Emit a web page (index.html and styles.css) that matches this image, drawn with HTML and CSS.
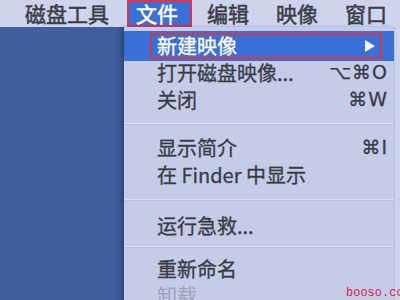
FILE: index.html
```html
<!DOCTYPE html>
<html lang="zh-CN">
<head>
<meta charset="utf-8">
<title>磁盘工具 文件菜单</title>
<link rel="stylesheet" href="styles.css">
</head>
<body>
<div class="screen">
  <div class="menubar">
    <span class="mb-item">磁盘工具</span>
    <span class="mb-item mb-active">文件</span>
    <span class="mb-item">编辑</span>
    <span class="mb-item">映像</span>
    <span class="mb-item">窗口</span>
  </div>
  <div class="below">
    <div class="desktop"></div>
    <div class="menu">
      <div class="row row-hl">
        <div class="mark">
          <span class="label">新建映像</span>
          <span class="arrow"></span>
        </div>
      </div>
      <div class="row"><span class="label">打开磁盘映像...</span><span class="key">⌥⌘O</span></div>
      <div class="row"><span class="label">关闭</span><span class="key">⌘W</span></div>
      <div class="sep sep-a"></div>
      <div class="row"><span class="label">显示简介</span><span class="key">⌘I</span></div>
      <div class="row"><span class="label">在 Finder 中显示</span></div>
      <div class="sep sep-b"></div>
      <div class="row"><span class="label">运行急救...</span></div>
      <div class="sep sep-c"></div>
      <div class="row"><span class="label">重新命名</span></div>
      <div class="row row-dim"><span class="label">卸载</span></div>
    </div>
    <div class="edge"></div>
  </div>
  <div class="watermark">booso.com</div>
</div>
</body>
</html>
```
FILE: styles.css
```css
html, body {
  margin: 0;
  padding: 0;
}
body {
  width: 400px;
  height: 300px;
  overflow: hidden;
  background: #c9d1eb;
  font-family: "Noto Sans CJK SC", "Noto Sans", "DejaVu Sans", sans-serif;
  color: #393c48;
}
.screen {
  position: relative;
  width: 400px;
  height: 300px;
  overflow: hidden;
  display: flex;
  flex-direction: column;
}
.menubar {
  height: 27px;
  flex: 0 0 27px;
  display: flex;
  align-items: center;
  padding-left: 25px;
  background: #cdd4ec;
  font-size: 21px;
  color: #3a3d48;
  -webkit-text-stroke: 0.5px currentColor;
}
.mb-item {
  margin-right: 27px;
  line-height: 1.2;
  white-space: nowrap;
}
.mb-active {
  align-self: stretch;
  display: flex;
  align-items: center;
  background: #3a6fd6;
  color: #ffffff;
  box-shadow: inset 0 0 0 2px #d6364e;
  padding: 0 14px 0 9px;
  margin-left: -9px;
  margin-right: 15px;
}
.below {
  flex: 1;
  display: flex;
}
.desktop {
  flex: 0 0 124px;
  background: linear-gradient(to right, #405f9e 0, #3f5e9c 114px, #36538d 124px);
}
.menu {
  flex: 0 0 270px;
  background: #c4cce7;
  padding-top: 4px;
  display: flex;
  flex-direction: column;
  font-size: 20px;
  -webkit-text-stroke: 0.3px currentColor;
  box-shadow: -2px 0 3px rgba(20, 30, 60, 0.25);
}
.edge {
  flex: 1;
  background: #ccd4ee;
  border-left: 1px solid #b9c2e0;
}
.row {
  height: 27px;
  flex: 0 0 27px;
  display: flex;
  align-items: center;
  justify-content: space-between;
  padding: 0 6px 0 33px;
  line-height: 1.2;
  white-space: nowrap;
}
.row-hl {
  background: #3a6fd6;
  box-shadow: 0 2px 0 #3a6fd6;
  height: 28px;
  flex: 0 0 28px;
  padding: 2px 12px 0 26px;
  box-sizing: border-box;
  align-items: stretch;
  position: relative;
  z-index: 1;
}
.mark {
  flex: 1;
  box-sizing: border-box;
  border: 2px solid #d6364e;
  display: flex;
  align-items: center;
  justify-content: space-between;
  padding: 0 5px;
  color: #ffffff;
}
.arrow {
  width: 0;
  height: 0;
  border-top: 6px solid transparent;
  border-bottom: 6px solid transparent;
  border-left: 10px solid #f2f5ff;
}
.key {
  font-family: "DejaVu Sans", "Noto Sans", sans-serif;
  font-size: 19px;
  letter-spacing: 1px;
}
.row-dim {
  color: #9ba2bc;
  -webkit-text-stroke: 0;
}
.sep {
  height: 1px;
  flex: 0 0 1px;
  background: #d9def1;
  box-shadow: 0 1px 0 #b8c0dd;
}
.sep-a {
  margin: 10px 0 10px;
}
.sep-b {
  margin: 11px 0 12px;
}
.sep-c {
  margin: 7px 0 8px;
}
.watermark {
  position: absolute;
  left: 346px;
  top: 286px;
  font-family: "Liberation Mono", "DejaVu Sans Mono", monospace;
  font-size: 12px;
  color: #e0204a;
  white-space: nowrap;
  line-height: 14px;
}
```
